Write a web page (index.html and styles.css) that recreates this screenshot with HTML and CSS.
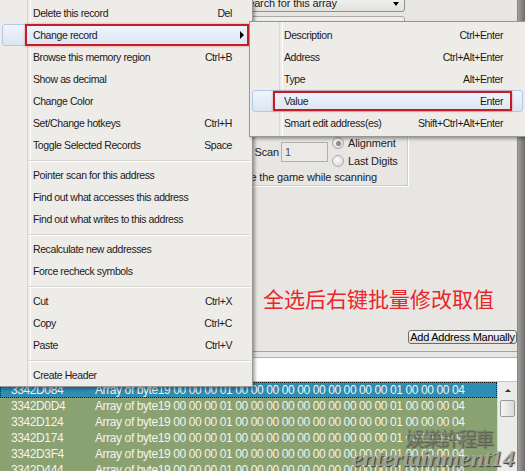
FILE: index.html
```html
<!DOCTYPE html>
<html lang="zh-CN">
<head>
  <meta charset="UTF-8">
  <title>Change record - Value</title>
  <link rel="stylesheet" href="styles.css">
</head>
<body>
<div class="window">
  <div class="content">
    <div class="form">
      <div class="combo"><span>Search for this array</span><span class="combo-arrow"></span></div>
      <div class="combo box2"></div>
      <div class="group">
        <div class="scan-row">
          <span class="lbl">Fast Scan</span>
          <span class="edit">1</span>
          <div class="radios">
            <div class="radio"><span class="dot checked"></span>Alignment</div>
            <div class="radio"><span class="dot"></span>Last Digits</div>
          </div>
        </div>
        <div class="pause">Pause the game while scanning</div>
      </div>
      <div class="note">全选后右键批量修改取值</div>
      <div class="add-row"><button class="btn">Add Address Manually</button></div>
    </div>
    <div class="splitter"></div>
    <div class="list-head"></div>
    <div class="list">
      <div class="rows">
        <div class="row sel"><span class="addr">3342D084</span><span>Array of byte19 00 00 00 01 00 00 00 00 00 00 00 00 00 00 01 00 00 00 04</span></div>
        <div class="row"><span class="addr">3342D0D4</span><span>Array of byte19 00 00 00 01 00 00 00 00 00 00 00 00 00 00 01 00 00 00 04</span></div>
        <div class="row"><span class="addr">3342D124</span><span>Array of byte19 00 00 00 01 00 00 00 00 00 00 00 00 00 00 01 00 00 00 04</span></div>
        <div class="row"><span class="addr">3342D174</span><span>Array of byte19 00 00 00 01 00 00 00 00 00 00 00 00 00 00 01 00 00 00 04</span></div>
        <div class="row"><span class="addr">3342D3F4</span><span>Array of byte19 00 00 00 01 00 00 00 00 00 00 00 00 00 00 01 00 00 00 04</span></div>
        <div class="row"><span class="addr">3342D444</span><span>Array of byte19 00 00 00 01 00 00 00 00 00 00 00 00 00 00 01 00 00 00 04</span></div>
      </div>
      <div class="vscroll">
        <span class="sb-up"></span>
        <span class="thumb"></span>
        <span class="sb-fill"></span>
        <span class="sb-down"></span>
      </div>
    </div>
  </div>
  <div class="edge"></div>

  <!-- 水印 -->
  <div class="wm-cn">娛樂許程車</div>
  <div class="wm-en">entertainment14</div>

  <!-- 右键菜单 -->
  <div class="ctx">
    <div class="item"><span>Delete this record</span><span>Del</span></div>
    <div class="item hot"><span>Change record</span><span class="arrow"></span><span class="mark"></span></div>
    <div class="item"><span>Browse this memory region</span><span>Ctrl+B</span></div>
    <div class="item"><span>Show as decimal</span></div>
    <div class="item"><span>Change Color</span></div>
    <div class="item"><span>Set/Change hotkeys</span><span>Ctrl+H</span></div>
    <div class="item"><span>Toggle Selected Records</span><span>Space</span></div>
    <div class="sep"></div>
    <div class="item"><span>Pointer scan for this address</span></div>
    <div class="item"><span>Find out what accesses this address</span></div>
    <div class="item"><span>Find out what writes to this address</span></div>
    <div class="sep"></div>
    <div class="item"><span>Recalculate new addresses</span></div>
    <div class="item"><span>Force recheck symbols</span></div>
    <div class="sep"></div>
    <div class="item"><span>Cut</span><span>Ctrl+X</span></div>
    <div class="item"><span>Copy</span><span>Ctrl+C</span></div>
    <div class="item"><span>Paste</span><span>Ctrl+V</span></div>
    <div class="sep"></div>
    <div class="item"><span>Create Header</span></div>
  </div>

  <!-- 子菜单 -->
  <div class="ctx sub">
    <div class="item"><span>Description</span><span>Ctrl+Enter</span></div>
    <div class="item"><span>Address</span><span>Ctrl+Alt+Enter</span></div>
    <div class="item"><span>Type</span><span>Alt+Enter</span></div>
    <div class="item hot"><span>Value</span><span>Enter</span><span class="mark"></span></div>
    <div class="item"><span>Smart edit address(es)</span><span>Shift+Ctrl+Alt+Enter</span></div>
  </div>
</div>
</body>
</html>
```
FILE: styles.css
```css
* {
  box-sizing: border-box;
}
body {
  margin: 0;
  width: 525px;
  height: 471px;
  overflow: hidden;
  background: #e8e6e2;
  font-family: 'Liberation Sans', Arial, sans-serif;
  color: #111;
}
.window {
  position: relative;
  display: flex;
  height: 471px;
}
.content {
  width: 517px;
  display: flex;
  flex-direction: column;
}
.edge {
  flex: 1;
  background: linear-gradient(to right, #a19f9c, #6f6d6b);
  border-left: 1px solid #8a8885;
}

/* 后面的窗口 */
.form {
  height: 351px;
  flex-shrink: 0;
  padding-left: 248px;
  display: flex;
  flex-direction: column;
  align-items: flex-start;
  font-size: 11px;
  letter-spacing: -0.15px;
  color: #222;
}
.combo {
  margin-top: -5px;
  margin-left: -12px;
  width: 169px;
  height: 17px;
  padding: 0 5px 0 4px;
  display: flex;
  align-items: center;
  justify-content: space-between;
  border: 1px solid #8e8f8f;
  border-radius: 3px;
  background: linear-gradient(#f4f4f3, #e2e1de);
  line-height: 15px;
  white-space: nowrap;
}
.combo-arrow {
  width: 0;
  height: 0;
  border-left: 3px solid transparent;
  border-right: 3px solid transparent;
  border-top: 4px solid #000;
}
.box2 {
  margin-top: 4px;
  height: 22px;
  border-color: #a9a9a9;
  background: #efeeeb;
}
.group {
  margin-top: 8px;
  margin-left: -20px;
  width: 180px;
  padding: 87px 0 1px 0;
  border: 1px solid #cfccc7;
  box-shadow: 1px 1px 0 #fff;
}
.scan-row {
  height: 36px;
  display: flex;
  align-items: center;
}
.lbl {
  width: 50px;
  margin-right: 2px;
  text-align: right;
  white-space: nowrap;
  overflow: hidden;
}
.edit {
  width: 47px;
  height: 20px;
  padding-left: 3px;
  line-height: 18px;
  border: 1px solid #b3b1ad;
  background: #ebe9e5;
  color: #555;
}
.radios {
  margin-left: 4px;
  display: flex;
  flex-direction: column;
}
.radio {
  height: 18px;
  display: flex;
  align-items: center;
}
.dot {
  width: 12px;
  height: 12px;
  margin-right: 4px;
  border-radius: 50%;
  border: 1px solid #a9a9a9;
  background: radial-gradient(circle at 40% 35%, #fafafa, #d4d3d0);
  display: grid;
  place-items: center;
}
.dot.checked::after {
  content: '';
  width: 5px;
  height: 5px;
  border-radius: 50%;
  background: #8d8d8d;
}
.pause {
  height: 14px;
  line-height: 14px;
  margin-left: -3px;
  white-space: nowrap;
}
.note {
  margin-top: 99px;
  padding-left: 15px;
  font-family: 'Noto Sans CJK SC', sans-serif;
  font-size: 21px;
  line-height: 26px;
  letter-spacing: 0;
  color: #e8262b;
}
.add-row {
  align-self: stretch;
  margin-top: 19px;
  display: flex;
  justify-content: flex-end;
}
.btn {
  width: 109px;
  height: 14px;
  padding: 0;
  border: 1px solid #6c6c6c;
  border-radius: 3px;
  background: linear-gradient(#f6f6f6, #dedede);
  font-family: 'Liberation Sans', Arial, sans-serif;
  font-size: 11px;
  letter-spacing: -0.25px;
  line-height: 12px;
  color: #000;
  white-space: nowrap;
}

/* 地址列表 */
.splitter {
  height: 7px;
  flex-shrink: 0;
  border-top: 1px solid #a4a29e;
  border-bottom: 1px solid #b3b1ad;
}
.list-head {
  height: 24px;
  flex-shrink: 0;
  background: #fff;
  border-bottom: 1px solid #c6c6c6;
}
.list {
  flex: 1;
  display: flex;
  overflow: hidden;
}
.rows {
  flex: 1;
  font-size: 12px;
  letter-spacing: -0.4px;
  color: #f3f3ef;
}
.row {
  height: 16px;
  line-height: 16px;
  display: flex;
  background: #8aa172;
  white-space: nowrap;
  overflow: hidden;
}
.row.sel {
  background: #2f8cb3;
  outline: 1px dotted #1a1a1a;
  outline-offset: -1px;
}
.addr {
  width: 95px;
  padding-left: 11px;
  flex-shrink: 0;
}
.vscroll {
  width: 20px;
  background: #ebebea;
  border-left: 1px solid #d6d6d6;
  display: flex;
  flex-direction: column;
  align-items: center;
}
.sb-up,
.sb-down {
  height: 16px;
  width: 100%;
  display: grid;
  place-items: center;
}
.sb-up::after,
.sb-down::after {
  content: '';
  border-left: 3px solid transparent;
  border-right: 3px solid transparent;
}
.sb-up::after {
  border-bottom: 3px solid #333;
}
.sb-down::after {
  border-top: 3px solid #333;
}
.thumb {
  width: 15px;
  height: 17px;
  margin-top: 2px;
  border: 1px solid #9a9a9a;
  border-radius: 2px;
  background: linear-gradient(to right, #f6f6f6, #dadada);
}
.sb-fill {
  flex: 1;
}

/* 水印 */
.wm-cn {
  position: absolute;
  left: 405px;
  top: 424px;
  font-family: 'Noto Sans CJK TC', sans-serif;
  font-size: 19px;
  letter-spacing: -1.5px;
  color: rgba(120, 122, 108, 0.8);
  text-shadow: 1px 1px 1px rgba(40, 40, 40, 0.6);
}
.wm-en {
  position: absolute;
  left: 352px;
  top: 445px;
  font-family: 'Liberation Serif', serif;
  font-style: italic;
  font-weight: bold;
  font-size: 24px;
  line-height: 26px;
  color: rgba(175, 176, 165, 0.85);
  text-shadow: 1px 1px 1px #3a3a3a;
}

/* 右键菜单 */
.ctx {
  position: absolute;
  left: -2px;
  top: -1px;
  width: 255px;
  padding: 2px 2px 0 3px;
  border: 1px solid #979797;
  background: #eeece9;
  box-shadow: 2px 2px 3px rgba(0, 0, 0, 0.35);
  font-size: 10.5px;
  letter-spacing: -0.4px;
  color: #1a1a1a;
  z-index: 2;
}
.ctx::before {
  content: '';
  position: absolute;
  left: 28px;
  top: 0;
  bottom: 0;
  width: 2px;
  border-left: 1px solid #d9d7d3;
  border-right: 1px solid #fff;
}
.item {
  position: relative;
  z-index: 1;
  height: 22px;
  padding: 0 17px 0 30px;
  display: flex;
  align-items: center;
  justify-content: space-between;
  border: 1px solid transparent;
  border-radius: 3px;
  white-space: nowrap;
}
.item.hot {
  background: linear-gradient(#f0f5fc, #dbe5f2);
  border-color: #b4c9e4;
}
.sep {
  position: relative;
  z-index: 1;
  height: 8px;
  margin-left: 26px;
  background: linear-gradient(transparent 4px, #d6d4d0 4px, #d6d4d0 5px, #fff 5px, #fff 6px, transparent 6px);
}
.arrow {
  position: absolute;
  right: 5px;
  top: 50%;
  margin-top: -4px;
  border-left: 4px solid #000;
  border-top: 4px solid transparent;
  border-bottom: 4px solid transparent;
}
.mark {
  position: absolute;
  left: 22px;
  right: 0;
  top: -1px;
  bottom: -1px;
  border: 2px solid #c41e24;
  box-shadow: 0 0 2px rgba(220, 60, 60, 0.6);
}
.sub {
  left: 249px;
  top: 21px;
  width: 277px;
  padding: 2px;
  z-index: 3;
}
.sub::before {
  left: 29px;
}
.sub .item {
  padding: 0 19px 0 31px;
}
.sub .mark {
  left: 20px;
  right: 10px;
  top: 0;
  bottom: 0;
}
```
